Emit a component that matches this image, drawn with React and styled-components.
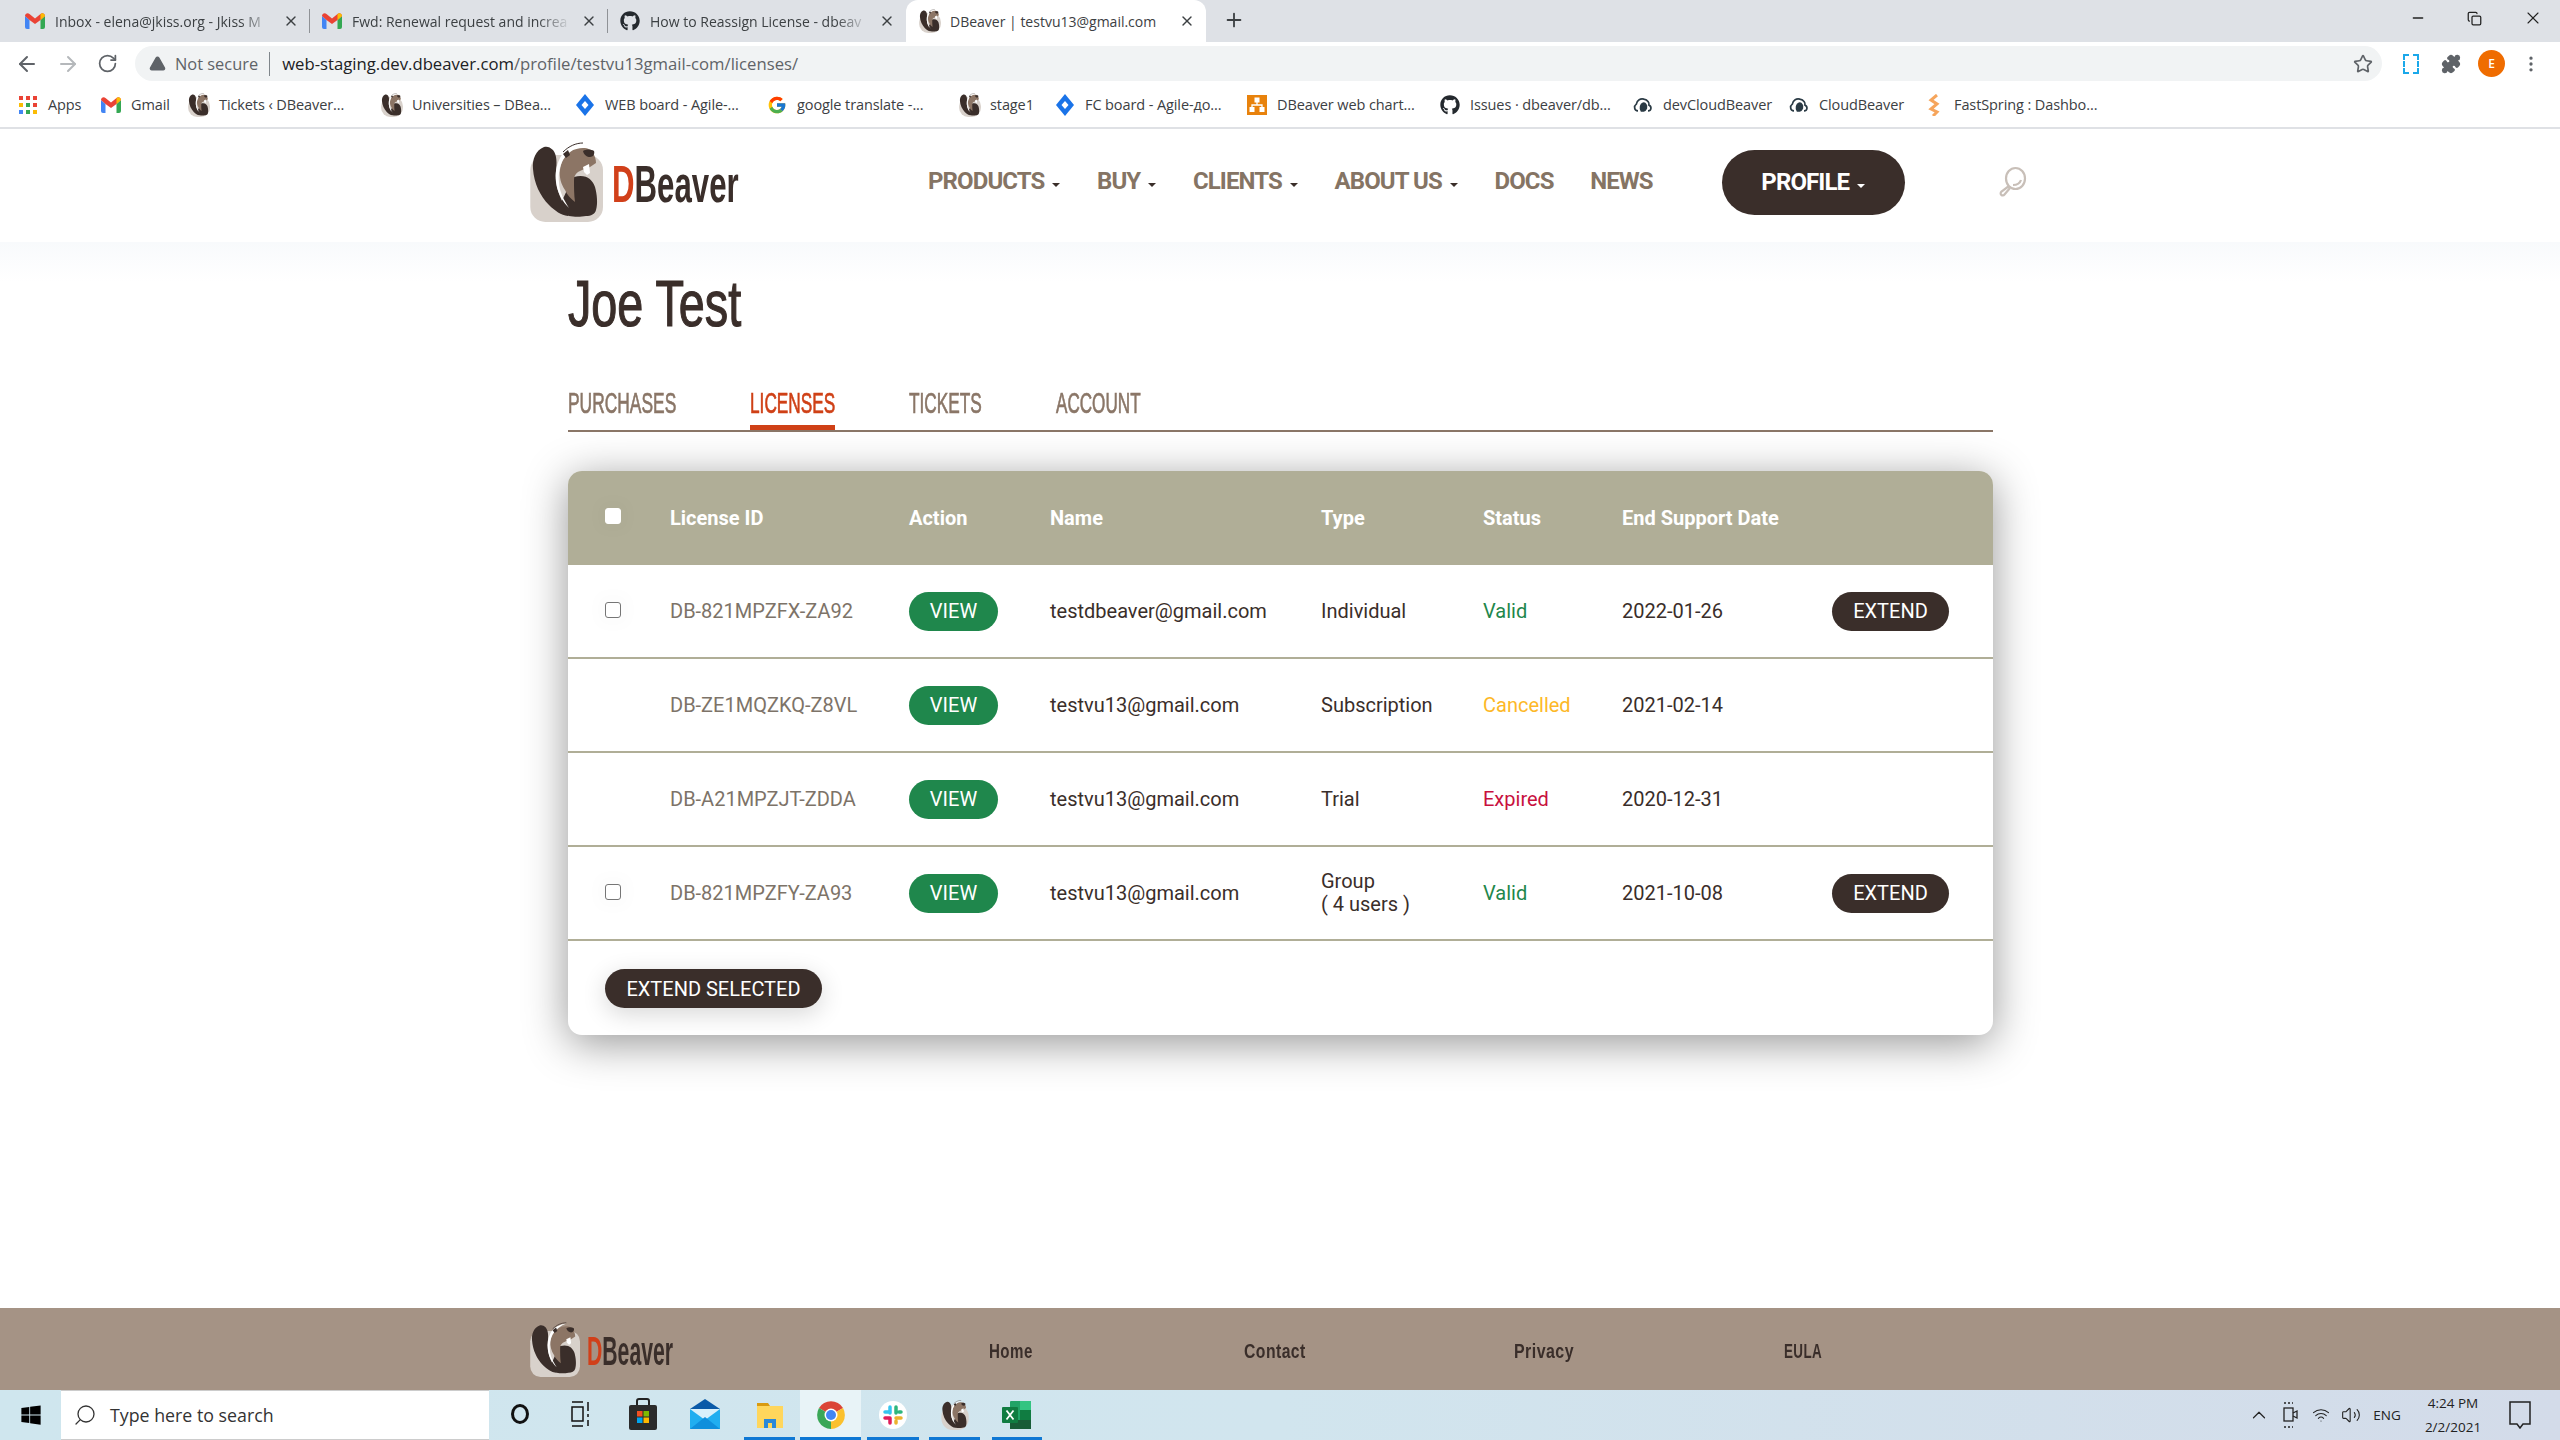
import React from 'react';
import styled, { createGlobalStyle } from 'styled-components';
import { ArrowLeft, ArrowRight, RotateCw, Star, EllipsisVertical, Minus, X, Copy, Plus, TriangleAlert, ChevronUp, Volume2, Wifi, Search, Puzzle } from 'lucide-react';
import { FaGithub, FaWindows } from 'react-icons/fa';
import { FcGoogle } from 'react-icons/fc';

const Global = createGlobalStyle`
  html, body { margin: 0; padding: 0; background: #fff; }
  * { box-sizing: border-box; }
`;

const Page = styled.div`
  width: 2560px; height: 1440px; display: flex; flex-direction: column; overflow: hidden;
  font-family: Roboto, "Liberation Sans", sans-serif; background: #fff;
`;

/* Browser chrome */
const TabStrip = styled.div`
  height: 42px; background: #dee1e6; display: flex; align-items: stretch; padding-left: 13px;
  flex: none;
`;
const Tab = styled.div`
  width: ${p => p.$w}px; display: flex; align-items: center; padding: 0 10px 0 ${p => (p.$active ? 14 : 12)}px; gap: 10px;
  font: 14px "Open Sans", sans-serif; color: #3c4043;
  background: ${p => (p.$active ? '#fff' : 'transparent')};
  border-radius: ${p => (p.$active ? '12px 12px 0 0' : '0')};
  &::after {
    content: ''; width: 1px; height: 24px;
    background: ${p => (p.$sep ? '#8f9296' : 'transparent')};
    margin-right: -10px;
  }
`;
const TabTitle = styled.span`
  flex: 1; white-space: nowrap;
  ${p => !p.$active && `-webkit-mask-image: linear-gradient(90deg, #000 85%, transparent);`}
`;
const TabClose = styled(X)`width: 16px; height: 16px; color: #3c4043; flex: none; margin-right: 0;`;
const NewTab = styled(Plus)`width: 22px; height: 22px; color: #3c4043; margin: 9px 0 0 17px;`;
const WindowControls = styled.div`
  margin-left: auto; display: flex; align-items: center; height: 36px; color: #222; gap: 41px; padding-right: 17px;
`;
const Toolbar = styled.div`
  height: 43px; background: #fff; display: flex; align-items: center; flex: none;
`;
const NavIcons = styled.div`
  width: 135px; display: flex; align-items: center; gap: 17px; padding-left: 15px; color: #5f6368; flex: none;
`;
const UrlBar = styled.div`
  width: 2247px; height: 35px; background: #f1f3f4; border-radius: 18px; display: flex; align-items: center;
  padding: 0 9px 0 14px; font: 16.7px "Open Sans", sans-serif; color: #5f6368; flex: none;
`;
const NotSecure = styled.span`
  margin-left: 9px; padding-right: 11px; border-right: 1px solid #80868b; margin-right: 12px; line-height: 24px;
  font-size: 16.4px;
`;
const UrlHost = styled.span`color: #202124;`;
const StarIcon = styled(Star)`margin-left: auto; color: #5f6368; width: 20px; height: 20px;`;
const Extensions = styled.div`
  flex: 1; display: flex; align-items: center; padding-left: 21px; color: #5f6368;
`;
const DashedBox = styled.span`
  width: 16px; height: 20px; border: 2px dashed #1ba8ea; flex: none;
`;
const PuzzleIcon = styled(Puzzle)`margin-left: 22px; width: 20px; height: 20px; fill: #5f6368;`;
const Avatar = styled.span`
  width: 27px; height: 27px; border-radius: 50%; background: #ef6c00; color: #fff; font: 600 12px "Open Sans", sans-serif;
  display: flex; align-items: center; justify-content: center; margin-left: 17px; flex: none;
`;
const MoreIcon = styled(EllipsisVertical)`margin-left: 16px; width: 20px; height: 20px;`;
const BookmarkBar = styled.div`
  height: 44px; padding: 0 0 3px 18px; background: #fff; display: flex; align-items: center; flex: none;
  border-bottom: 2px solid #dfe1e5;
`;
const Bookmark = styled.div`
  width: ${p => p.$w}px; display: flex; align-items: center; gap: 10px; font: 14.5px "Open Sans", sans-serif; color: #3c4043;
  white-space: nowrap; flex: none;
  letter-spacing: -0.1px;
`;
const FavSlot = styled.span`
  width: 20px; height: 22px; display: flex; align-items: center; justify-content: center; flex: none; font-size: 20px; color: #24292e;
`;

/* Site header */
const SiteHeader = styled.header`
  height: 113px; padding: 0 0 7px 530px; background: #fff; display: flex; align-items: center; flex: none;
`;
const Logo = styled.div`
  display: flex; align-items: flex-end; height: ${p => p.$h}px; flex: none;
  width: ${p => p.$w}px;
`;
const LogoText = styled.span`
  font-family: "Liberation Sans", sans-serif; font-weight: 700; color: #3a2e2a;
  font-size: ${p => p.$size}px; line-height: 1; display: inline-block; transform: scaleX(${p => p.$sx}); transform-origin: left center;
  margin-left: ${p => p.$ml}px; margin-bottom: ${p => p.$mb}px; white-space: nowrap;
  b { color: #d1401a; font-weight: 700; }
`;
const MainNav = styled.nav`
  margin: 0 0 2px 188px; display: flex; align-items: center; gap: 36.600px; flex: none;
`;
const NavItem = styled.a`
  font: 700 24px Roboto, sans-serif; letter-spacing: -0.9px; color: #857464; white-space: nowrap; display: flex; align-items: center;
`;
const Caret = styled.span`
  width: 0; height: 0; border-left: 4px solid transparent; border-right: 4px solid transparent;
  border-top: 4px solid ${p => p.$c || '#3a2e2a'}; margin-left: 8px; margin-top: 8px;
`;
const ProfileBtn = styled.button`
  margin-left: 69px; width: 183px; height: 65px; border-radius: 33px; border: 0; background: #3a2e2a; color: #fff;
  font: 700 24px Roboto, sans-serif; letter-spacing: -0.9px; display: flex; align-items: center; justify-content: center;
`;
const SearchSlot = styled.span`
  margin-left: 91px; display: flex; color: #c8bfb8;
`;

/* Content */
const Main = styled.main`
  flex: 1; padding: 25px 0 0 568px; background: linear-gradient(#f8fafc, #fff 40px);
`;
const Title = styled.h1`
  margin: 0; font: 400 64px/74px "Liberation Sans", sans-serif; color: #3a2e2a; height: 74px;
  transform: scaleX(.73); transform-origin: left center; white-space: nowrap; -webkit-text-stroke: 1.200px #3a2e2a;
`;
const TabsRow = styled.div`
  margin-top: 44px; width: 1425px; height: 47px; display: flex; border-bottom: 2px solid #8a7667;
`;
const PageTab = styled.div`
  width: ${p => p.$w}px; margin-right: ${p => p.$mr}px; height: 45px; flex: none;
  border-bottom: 5px solid ${p => (p.$active ? '#cf4016' : 'transparent')};
`;
const PageTabText = styled.span`
  display: inline-block; font: 400 29px/36px "Liberation Sans", sans-serif;
  color: ${p => (p.$active ? '#cf4016' : '#8a7667')}; transform: scaleX(${p => p.$sx}); transform-origin: left center; white-space: nowrap;
  -webkit-text-stroke: .7px ${p => (p.$active ? '#cf4016' : '#8a7667')};
`;
const Card = styled.div`
  margin-top: 39px; width: 1425px; height: 564px; background: #fff; border-radius: 14px; overflow: hidden;
  box-shadow: 0 8px 44px rgba(0,0,0,.42);
`;
const TableRow = styled.div`
  height: 94px; display: grid; grid-template-columns: 102px 239px 141px 271px 162px 139px 210px 161px; align-items: center;
  ${p => p.$head
    ? `background: #b0ae97; color: #fff; font-weight: 700;`
    : `border-bottom: 2px solid #b0ae97; color: #3a2e2a;`}
  font-size: 20px;
`;
const CheckCell = styled.div`display: flex; padding-left: 37px;`;
const Check = styled.span`
  width: 16px; height: 16px; border-radius: 3px; background: #fff; display: block;
  margin-top: ${p => (p.$head ? -4 : -2)}px;
  border: 1px solid ${p => (p.$head ? '#fff' : '#767676')};
  box-shadow: 0 0 14px 10px rgba(0,0,0,.012);
`;
const LicenseId = styled.div`color: #7d7368;`;
const ViewBtn = styled.button`
  width: 89px; height: 39px; border: 0; border-radius: 20px; background: #1f874c; color: #fff; font: 400 20px Roboto, sans-serif;
`;
const Status = styled.div`color: ${p => p.$c};`;
const TypeCell = styled.div`line-height: 23px;`;
const DarkBtn = styled.button`
  height: 39px; width: ${p => p.$w}px; border: 0; border-radius: 20px; background: #3a2e2a; color: #fff; font: 400 20px Roboto, sans-serif;
  white-space: nowrap; padding: 0;
  box-shadow: ${p => (p.$shadow ? '0 6px 24px rgba(0,0,0,.16)' : 'none')};
`;
const CardFooter = styled.div`padding: 28px 0 0 37px;`;

/* Footer */
const SiteFooter = styled.footer`
  height: 82px; background: #a59385; display: flex; align-items: center; padding-left: 530px; flex: none;
`;
const FooterLink = styled.a`
  display: block; width: ${p => p.$w}px; flex: none; color: #3a2e2a; font: 700 21px "Liberation Sans", sans-serif; letter-spacing: .6px;
  margin-top: 3px; transform: scaleX(${p => p.$sx}); transform-origin: left center;
`;

/* Taskbar */
const Taskbar = styled.div`
  height: 50px; flex: none; display: flex; align-items: stretch; background: linear-gradient(90deg, #cfe6ee, #d1e5ee 50%, #d3dbe9);
`;
const StartSlot = styled.div`width: 61px; display: flex; align-items: center; justify-content: center; font-size: 22px; color: #000; flex: none;`;
const SearchBox = styled.div`
  width: 428px; background: #fff; border: 1px solid #ccc; border-width: 1px 0; display: flex; align-items: center; padding-left: 12px; gap: 13px;
  font: 17.8px "Open Sans", sans-serif; color: #333; flex: none;
`;
const TaskIcons = styled.div`display: flex; flex: none; align-items: stretch;`;
const TaskSlot = styled.div`
  width: ${p => p.$w}px; margin-left: ${p => p.$ml || 0}px; display: flex; align-items: center; justify-content: center; flex: none;
  background: ${p => (p.$focus ? '#e8f3f7' : 'transparent')};
  border-bottom: 3px solid ${p => (p.$running ? '#0f78d4' : 'transparent')};
  padding-top: ${p => (p.$running ? 3 : 0)}px;
`;
const Cortana = styled.span`width: 18px; height: 20px; border-radius: 50%; border: 3px solid #111;`;
const Tray = styled.div`
  margin-left: auto; display: flex; align-items: center; color: #222; flex: none;
  font: 13.5px "Open Sans", sans-serif; padding-right: 29px;
`;
const TrayIcon = styled.span`display: flex; width: ${p => p.$w}px; flex: none; justify-content: center;`;
const Clock = styled.div`
  width: 90px; margin-right: 11px; text-align: center; line-height: 24px; font-size: 13.5px; flex: none;
`;

/* Drawings */
const Gmail = () => (
  <svg width="20" height="16" viewBox="0 0 20 16">
    <path d="M0 3v11a2 2 0 0 0 2 2h2.500V7L0 3z" fill="#4285f4" />
    <path d="M20 3v11a2 2 0 0 1-2 2h-2.500V7L20 3z" fill="#34a853" />
    <path d="M0 3c0-2.500 2.800-3.800 4.500-2L10 5.500 15.500 1c1.700-1.800 4.500-.5 4.500 2l-4.500 4L10 11 4.500 7 0 3z" fill="#ea4335" />
    <path d="M15.500 1c1.700-1.800 4.500-.5 4.500 2l-4.500 4z" fill="#fbbc04" />
  </svg>
);
const BeaverMark = ({ w = 73, h = 80, rx = 15 }) => (
  <svg width={w} height={h} viewBox="0 0 73 80" style={{ flex: 'none' }}>
    <rect x="0.300" y="13" width="72.700" height="67" rx={rx} fill="#d8d1cb" />
    <path d="M14 5C6 8 2 17 3 27C4 41 10 54 19 63C25 69 31 73 38 74L46 68L33 61C28 51 25 40 26 29C27 21 27 13 23 8C20 5 17 4 14 5z" fill="#3a2e2a" />
    <path d="M31 61c4 6 7 12 8 13 5 1 12 1 17 0 5 0 9-2 10-6 2-6 1-16-1-23-3-8-9-13-21-10-3 1-5 5-6 11z" fill="#3a2e2a" />
    <path d="M30 28C31 20 34 14 40 10C44 7 49 6 53 6C58 6 62 8 63 11C65 14 66 18 66 21L60 25C56 26 52 28 48 30C45 32 44 35 44 38C44 45 44 53 45 60C41 57 37 53 35 48C31 42 29 35 30 28z" fill="#8c7565" />
    <path d="M53 2C43 3 34 8 30 16C26 24 25 32 26 40C27 50 32 59 39 66C34 58 29 49 29 40C28 32 30 24 33 18C38 10 45 5 53 2z" fill="#fff" />
    <path d="M33 10c6-6 13-9 20-9" fill="none" stroke="#3a2e2a" strokeWidth="1" />
    <path d="M33 12l5-4 2 5-4 3z" fill="#3a2e2a" />
    <path d="M53 9c3-2 8-2 11 0 1 3-1 6-4 6s-6-2-7-6z" fill="#3a2e2a" />
    <path d="M53 25l6-3 1 9-3 2-3-3z" fill="#fff" />
  </svg>
);
const SmallBeaver = ({ s = 22 }) => <BeaverMark w={s} h={s + 2} rx={30} />;
const Jira = () => (
  <svg width="20" height="22" viewBox="0 0 20 22">
    <path d="M10 0l9 11-9 11-9-11z" fill="#1a73e8" />
    <path d="M10 7l3.500 4-3.500 4-3.500-4z" fill="#fff" />
  </svg>
);
const Apps = () => (
  <svg width="18" height="18" viewBox="0 0 18 18">
    {[0, 1, 2].map(r => [0, 1, 2].map(c => (
      <rect key={`${r}${c}`} x={c * 7} y={r * 7} width="4" height="4"
        fill={[['#ea4335', '#ea4335', '#ea4335'], ['#fbbc04', '#34a853', '#ea4335'], ['#4285f4', '#34a853', '#fbbc04']][r][c]} />
    )))}
  </svg>
);
const Chart = () => (
  <svg width="20" height="20" viewBox="0 0 20 20">
    <rect width="20" height="20" fill="#e8820c" />
    <rect x="7.500" y="2.500" width="5" height="5" fill="#fff" />
    <rect x="2.500" y="12" width="5" height="5" fill="#fff" />
    <rect x="12.500" y="12" width="5" height="5" fill="#fff" />
    <path d="M10 7v3M5 12v-2h10v2" stroke="#fff" strokeWidth="1.300" fill="none" />
  </svg>
);
const CloudB = () => (
  <svg width="24" height="20" viewBox="0 0 24 20" fill="none" stroke="#2a3a44" strokeWidth="2">
    <path d="M6 17c-5 0-5-6-2-8 1-5 5-7 9-6 5 1 7 5 6 7 4 2 3 7-1 7" />
    <path d="M10 17c-2-3-1-8 2-9 3-1 5 3 4 6-1 2-2 3-3 3z" fill="#2a3a44" />
  </svg>
);
const FastSpring = () => (
  <svg width="12" height="22" viewBox="0 0 12 22" fill="none" stroke="#f6a55c" strokeWidth="3">
    <path d="M9 1L3 6l6 4-6 5 6 3-4 4" />
  </svg>
);
const SearchGlass = () => (
  <svg width="32" height="32" viewBox="0 0 32 32" fill="none" stroke="currentColor" strokeWidth="2.200">
    <ellipse cx="19.500" cy="12.500" rx="9.500" ry="10.500" />
    <path d="M13 20l-7.500 5.500c-2.500 2.500 1 5.500 3 3l5.500-6.500" />
    <path d="M17 19c4 0 7-2 8-5" />
  </svg>
);
const TaskView = () => (
  <svg width="20" height="26" viewBox="0 0 20 26" fill="none" stroke="#111" strokeWidth="1.500">
    <path d="M1 1h11M1 25h11M1 6h11v14H1zM17 1v9M17 13v3M17 19v6" />
  </svg>
);
const Store = () => (
  <svg width="28" height="32" viewBox="0 0 28 32">
    <path d="M8 8V3a2 2 0 0 1 2-2h8a2 2 0 0 1 2 2v5" fill="none" stroke="#222" strokeWidth="2" />
    <rect y="7" width="28" height="25" rx="2" fill="#2b2b2b" />
    <rect x="8" y="13" width="5.500" height="5.500" fill="#f25022" />
    <rect x="14.500" y="13" width="5.500" height="5.500" fill="#7fba00" />
    <rect x="8" y="19.500" width="5.500" height="5.500" fill="#00a4ef" />
    <rect x="14.500" y="19.500" width="5.500" height="5.500" fill="#ffb900" />
  </svg>
);
const MailIcon = () => (
  <svg width="30" height="30" viewBox="0 0 30 30">
    <path d="M0 10L15 0l15 10z" fill="#0a5aa8" />
    <rect y="10" width="30" height="20" fill="#20aef0" />
    <path d="M0 10h30L15 21z" fill="#d8f0fb" />
    <path d="M0 30l15-12 15 12z" fill="#0f8fdc" />
  </svg>
);
const Explorer = () => (
  <svg width="28" height="28" viewBox="0 0 28 28">
    <path d="M1 2h11l2 3H1z" fill="#d99a10" />
    <rect x="1" y="5" width="26" height="22" fill="#ffd65c" />
    <path d="M8 27v-9h12v9h-4v-5h-4v5z" fill="#2b88d8" />
  </svg>
);
const Chrome = () => (
  <svg width="28" height="28" viewBox="0 0 28 28">
    <path d="M14 14L2 7A14 14 0 0 1 26 7z" fill="#db4437" />
    <path d="M14 14L26 7A14 14 0 0 1 14 28z" fill="#fbc02d" />
    <path d="M14 14L14 28A14 14 0 0 1 2 7z" fill="#3aa757" />
    <circle cx="14" cy="14" r="6.500" fill="#fff" />
    <circle cx="14" cy="14" r="5" fill="#4285f4" />
  </svg>
);
const Slack = () => (
  <svg width="28" height="28" viewBox="0 0 28 28">
    <circle cx="14" cy="14" r="14" fill="#fff" />
    <path d="M11 6v6M6 11h5" stroke="#36c5f0" strokeWidth="3.500" strokeLinecap="round" />
    <path d="M17 6v6M22 11h-2" stroke="#2eb67d" strokeWidth="3.500" strokeLinecap="round" />
    <path d="M17 17h5M17 22v-2" stroke="#ecb22e" strokeWidth="3.500" strokeLinecap="round" />
    <path d="M11 17v5M6 17h5" stroke="#e01e5a" strokeWidth="3.500" strokeLinecap="round" />
  </svg>
);
const Excel = () => (
  <svg width="30" height="30" viewBox="0 0 30 30">
    <rect x="8" y="1" width="21" height="28" rx="1" fill="#21a366" />
    <rect x="18" y="1" width="11" height="9" fill="#33c481" />
    <rect x="18" y="10" width="11" height="10" fill="#107c41" />
    <rect x="8" y="20" width="21" height="9" fill="#185c37" />
    <rect y="7" width="16" height="16" rx="1" fill="#107c41" />
    <path d="M4.500 10.500l7 9M11.500 10.500l-7 9" stroke="#fff" strokeWidth="1.800" />
  </svg>
);
const Meet = () => (
  <svg width="16" height="28" viewBox="0 0 16 28" fill="none" stroke="#222" strokeWidth="1.300">
    <path d="M2 2h9M2 26h9" strokeDasharray="2 2" /><rect x="2" y="7" width="9" height="13" /><path d="M11 12l4-2v7l-4-2" />
  </svg>
);
const Notify = () => (
  <svg width="22" height="28" viewBox="0 0 22 28" fill="none" stroke="#222" strokeWidth="1.500">
    <path d="M1 1h20v22h-7l-3 4-3-4H1z" />
  </svg>
);

const chromeTabs = [
  { w: 297, icon: <Gmail />, t: 'Inbox - elena@jkiss.org - Jkiss M', sep: true },
  { w: 298, icon: <Gmail />, t: 'Fwd: Renewal request and increa', sep: true },
  { w: 298, icon: <FaGithub />, t: 'How to Reassign License - dbeav' },
  { w: 300, icon: <SmallBeaver />, t: 'DBeaver | testvu13@gmail.com', active: true },
];
const bookmarks = [
  [83, <Apps />, 'Apps'], [88, <Gmail />, 'Gmail'], [193, <SmallBeaver />, 'Tickets ‹ DBeaver...'],
  [193, <SmallBeaver />, 'Universities – DBea...'], [192, <Jira />, 'WEB board - Agile-...'],
  [193, <FcGoogle />, 'google translate -...'], [95, <SmallBeaver />, 'stage1'], [192, <Jira />, 'FC board - Agile-до...'],
  [193, <Chart />, 'DBeaver web chart...'], [193, <FaGithub />, 'Issues · dbeaver/db...'],
  [156, <CloudB />, 'devCloudBeaver'], [135, <CloudB />, 'CloudBeaver'], [200, <FastSpring />, 'FastSpring : Dashbo...'],
];
const navItems = [['PRODUCTS', 1], ['BUY', 1], ['CLIENTS', 1], ['ABOUT US', 1], ['DOCS', 0], ['NEWS', 0]];
const pageTabs = [
  ['PURCHASES', 108, 74, .6], ['LICENSES', 85, 74, .595, true], ['TICKETS', 73, 74, .595], ['ACCOUNT', 84, 0, .59],
];
const licenses = [
  { id: 'DB-821MPZFX-ZA92', name: 'testdbeaver@gmail.com', type: ['Individual'], st: 'Valid', c: '#1f874c', date: '2022-01-26', ext: true },
  { id: 'DB-ZE1MQZKQ-Z8VL', name: 'testvu13@gmail.com', type: ['Subscription'], st: 'Cancelled', c: '#fdb827', date: '2021-02-14' },
  { id: 'DB-A21MPZJT-ZDDA', name: 'testvu13@gmail.com', type: ['Trial'], st: 'Expired', c: '#c8103e', date: '2020-12-31' },
  { id: 'DB-821MPZFY-ZA93', name: 'testvu13@gmail.com', type: ['Group', '( 4 users )'], st: 'Valid', c: '#1f874c', date: '2021-10-08', ext: true },
];

export default function App() {
  return (
    <Page>
      <Global />
      <TabStrip>
        {chromeTabs.map(t => (
          <Tab key={t.t} $w={t.w} $active={t.active} $sep={t.sep}>
            <FavSlot>{t.icon}</FavSlot>
            <TabTitle $active={t.active}>{t.t}</TabTitle>
            <TabClose />
          </Tab>
        ))}
        <NewTab />
        <WindowControls>
          <Minus size={16} /><Copy size={15} /><X size={20} strokeWidth={1.3} />
        </WindowControls>
      </TabStrip>
      <Toolbar>
        <NavIcons>
          <ArrowLeft size={24} />
          <ArrowRight size={24} color="#b5b8bb" />
          <RotateCw size={21} />
        </NavIcons>
        <UrlBar>
          <TriangleAlert size={17} fill="#5f6368" color="#5f6368" />
          <NotSecure>Not secure</NotSecure>
          <span><UrlHost>web-staging.dev.dbeaver.com</UrlHost>/profile/testvu13gmail-com/licenses/</span>
          <StarIcon />
        </UrlBar>
        <Extensions>
          <DashedBox />
          <PuzzleIcon />
          <Avatar>E</Avatar>
          <MoreIcon />
        </Extensions>
      </Toolbar>
      <BookmarkBar>
        {bookmarks.map(([w, icon, t]) => (
          <Bookmark key={t} $w={w}><FavSlot>{icon}</FavSlot>{t}</Bookmark>
        ))}
      </BookmarkBar>

      <SiteHeader>
        <Logo $w={210} $h={80}>
          <BeaverMark />
          <LogoText $size={52} $sx={0.6} $ml={9} $mb={12}><b>D</b>Beaver</LogoText>
        </Logo>
        <MainNav>
          {navItems.map(([t, c]) => <NavItem key={t}>{t}{c ? <Caret /> : null}</NavItem>)}
        </MainNav>
        <ProfileBtn>PROFILE<Caret $c="#fff" /></ProfileBtn>
        <SearchSlot><SearchGlass /></SearchSlot>
      </SiteHeader>

      <Main>
        <Title>Joe Test</Title>
        <TabsRow>
          {pageTabs.map(([t, w, mr, sx, a]) => (
            <PageTab key={t} $w={w} $mr={mr} $active={a}>
              <PageTabText $active={a} $sx={sx}>{t}</PageTabText>
            </PageTab>
          ))}
        </TabsRow>
        <Card>
          <TableRow $head>
            <CheckCell><Check $head /></CheckCell>
            <div>License ID</div><div>Action</div><div>Name</div><div>Type</div><div>Status</div><div>End Support Date</div><div />
          </TableRow>
          {licenses.map(l => (
            <TableRow key={l.id}>
              <CheckCell>{l.ext ? <Check /> : null}</CheckCell>
              <LicenseId>{l.id}</LicenseId>
              <div><ViewBtn>VIEW</ViewBtn></div>
              <div>{l.name}</div>
              <TypeCell>{l.type.map(x => <div key={x}>{x}</div>)}</TypeCell>
              <Status $c={l.c}>{l.st}</Status>
              <div>{l.date}</div>
              <div>{l.ext ? <DarkBtn $w={117}>EXTEND</DarkBtn> : null}</div>
            </TableRow>
          ))}
          <CardFooter><DarkBtn $w={217} $shadow>EXTEND SELECTED</DarkBtn></CardFooter>
        </Card>
      </Main>

      <SiteFooter>
        <Logo $w={459} $h={55}>
          <BeaverMark w={50} h={55} />
          <LogoText $size={40} $sx={0.53} $ml={7} $mb={6}><b>D</b>Beaver</LogoText>
        </Logo>
        <FooterLink $w={255} $sx={.72}>Home</FooterLink>
        <FooterLink $w={270} $sx={.75}>Contact</FooterLink>
        <FooterLink $w={270} $sx={.76}>Privacy</FooterLink>
        <FooterLink $w={60} $sx={.64}>EULA</FooterLink>
      </SiteFooter>
      <Taskbar>
        <StartSlot><FaWindows /></StartSlot>
        <SearchBox><Search size={24} strokeWidth={1.3} style={{ transform: 'scaleX(-1)' }} />Type here to search</SearchBox>
        <TaskIcons>
          <TaskSlot $w={62}><Cortana /></TaskSlot>
          <TaskSlot $w={60}><TaskView /></TaskSlot>
          <TaskSlot $w={63}><Store /></TaskSlot>
          <TaskSlot $w={62}><MailIcon /></TaskSlot>
          <TaskSlot $running $w={51} $ml={8}><Explorer /></TaskSlot>
          <TaskSlot $running $focus $w={61} $ml={5}><Chrome /></TaskSlot>
          <TaskSlot $running $w={52} $ml={6}><Slack /></TaskSlot>
          <TaskSlot $running $w={51} $ml={10}><SmallBeaver s={28} /></TaskSlot>
          <TaskSlot $running $w={50} $ml={12}><Excel /></TaskSlot>
        </TaskIcons>
        <Tray>
          <TrayIcon $w={30}><ChevronUp size={22} strokeWidth={1.3} /></TrayIcon>
          <TrayIcon $w={31}><Meet /></TrayIcon>
          <TrayIcon $w={31}><Wifi size={18} strokeWidth={1.4} /></TrayIcon>
          <TrayIcon $w={30}><Volume2 size={20} strokeWidth={1.3} /></TrayIcon>
          <TrayIcon $w={42}>ENG</TrayIcon>
          <Clock><div>4:24 PM</div><div>2/2/2021</div></Clock>
          <TrayIcon $w={22}><Notify /></TrayIcon>
        </Tray>
      </Taskbar>
    </Page>
  );
}
